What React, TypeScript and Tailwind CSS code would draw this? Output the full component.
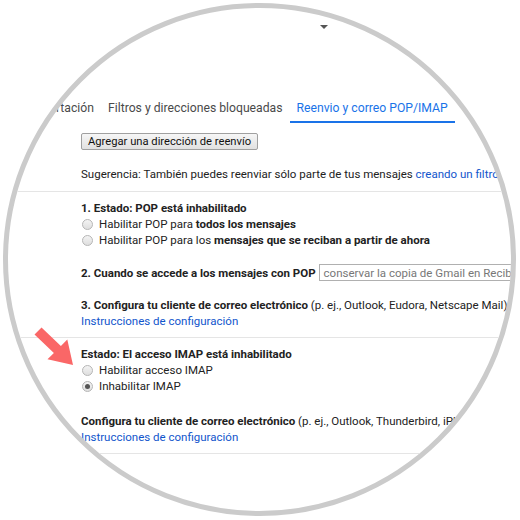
function Radio({ checked = false }: { checked?: boolean }) {
  return (
    <span className="mr-[6px] ml-[1px] inline-flex h-[11px] w-[11px] shrink-0 items-center justify-center rounded-full border border-[#b5b5b5] bg-gradient-to-b from-[#f4f4f4] to-[#dedede]">
      {checked && <span className="h-[5px] w-[5px] rounded-full bg-[#555]" />}
    </span>
  );
}

function Tab({ label, active = false, className = "" }: { label: string; active?: boolean; className?: string }) {
  return (
    <div
      className={`shrink-0 whitespace-nowrap px-[7px] pt-[5px] pb-[5px] text-[12.2px] leading-[16px] border-b-2 ${
        active ? "border-[#1a73e8] text-[#1a73e8]" : "border-transparent text-[#4a4a4a]"
      } ${className}`}
    >
      {label}
    </div>
  );
}

export default function App() {
  return (
    <div className="h-[520px] w-[520px] bg-white p-[3px] relative">
      <div className="h-[513px] w-[513px] overflow-hidden rounded-full border-[5px] border-[#cbcbcb] bg-white font-['Roboto','Liberation_Sans',sans-serif] text-[11.5px] leading-[16px] text-[#222]">
        {/* caret of the menu above */}
        <div className="h-[87px] pt-[17px] pl-[312px]">
          <div className="h-0 w-0 border-x-[4px] border-t-[4px] border-x-transparent border-t-[#555]" />
        </div>

        {/* Tabs */}
        <div className="flex h-[28px]">
          <Tab label="Importación" className="w-[93px] text-right" />
          <Tab label="Filtros y direcciones bloqueadas" />
          <Tab label="Reenvio y correo POP/IMAP" active />
          <Tab label="Complementos" />
        </div>

        {/* Forwarding */}
        <div className="pl-[73px]">
          <button className="mt-[10px] h-[17px] whitespace-nowrap rounded-[2px] border border-[#a0a0a0] bg-gradient-to-b from-[#f6f6f6] to-[#e1e1e1] px-[6px] font-['Roboto','Liberation_Sans',sans-serif] text-[11.2px] leading-[15px] text-[#111]">
            Agregar una dirección de reenvío
          </button>
          <div className="mt-[16px] whitespace-nowrap">
            Sugerencia: También puedes reenviar sólo parte de tus mensajes{" "}
            <span className="text-[#1155cc]">creando un filtro!</span>
          </div>
        </div>
        <div className="mt-[9px] h-px bg-[#e5e5e5]" />

        {/* POP */}
        <div className="pt-[8px] pb-[8px] pl-[73px] whitespace-nowrap">
          <div className="font-bold">1. Estado: POP está inhabilitado</div>
          <div className="flex items-center">
            <Radio />
            <span>
              Habilitar POP para <b>todos los mensajes</b>
            </span>
          </div>
          <div className="flex items-center">
            <Radio />
            <span>
              Habilitar POP para los <b>mensajes que se reciban a partir de ahora</b>
            </span>
          </div>
          <div className="mt-[16px] flex h-[17px] items-center">
            <b>2. Cuando se accede a los mensajes con POP</b>
            <div className="ml-[3px] flex h-[17px] items-center border border-[#b0b0b0] px-[4px] text-[#777]">
              conservar la copia de Gmail en Recibidos
            </div>
          </div>
          <div className="mt-[16px]">
            <b>3. Configura tu cliente de correo electrónico</b> (p. ej., Outlook, Eudora, Netscape Mail)
          </div>
          <div className="text-[#1155cc]">Instrucciones de configuración</div>
        </div>
        <div className="h-px bg-[#e5e5e5]" />

        {/* IMAP */}
        <div className="pt-[8px] pb-[8px] pl-[73px] whitespace-nowrap">
          <div className="font-bold">Estado: El acceso IMAP está inhabilitado</div>
          <div className="flex items-center">
            <Radio />
            <span>Habilitar acceso IMAP</span>
          </div>
          <div className="flex items-center">
            <Radio checked />
            <span>Inhabilitar IMAP</span>
          </div>
          <div className="mt-[19px]">
            <b>Configura tu cliente de correo electrónico</b> (p. ej., Outlook, Thunderbird, iPhone)
          </div>
          <div className="text-[#1155cc]">Instrucciones de configuración</div>
        </div>
        <div className="h-px bg-[#e5e5e5]" />
      </div>

      {/* red pointer arrow */}
      <svg className="absolute left-0 top-0 pointer-events-none" width="520" height="520" viewBox="0 0 520 520">
        <polygon
          points="41.5,327.5 60.9,345.9 67.3,339.5 73,365 47.5,359.3 53.9,352.9 34.5,334.5"
          fill="#fa6767"
        />
      </svg>
    </div>
  );
}
